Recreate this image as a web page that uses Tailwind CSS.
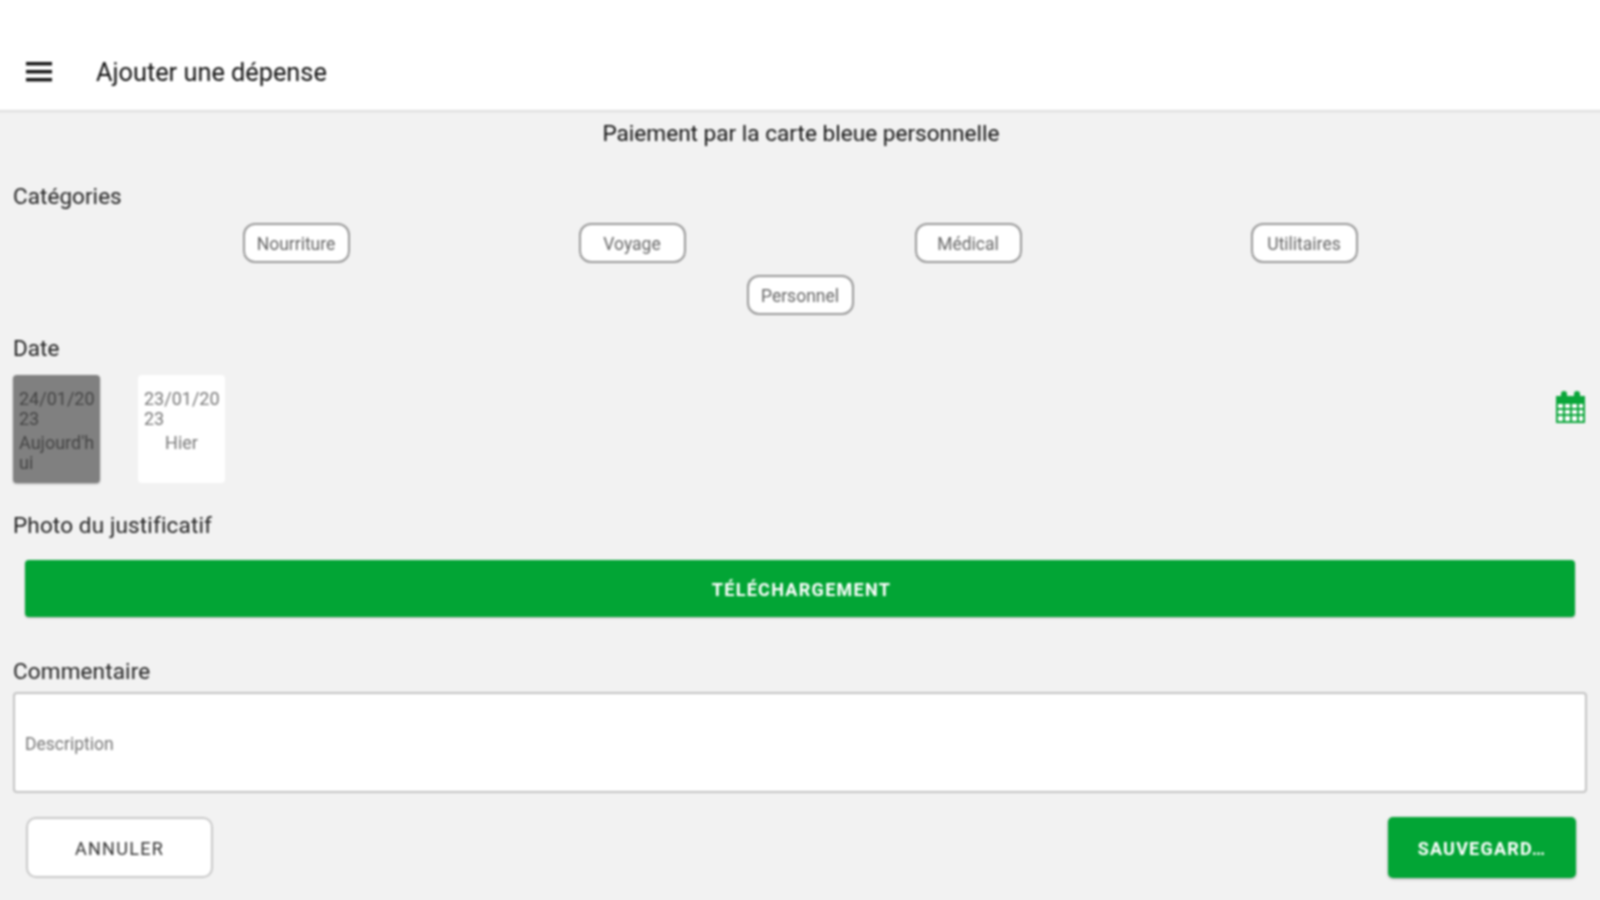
<!DOCTYPE html>
<html lang="fr">
<head>
<meta charset="utf-8">
<script src="https://cdn.jsdelivr.net/npm/@tailwindcss/browser@4"></script>
<title>Ajouter une dépense</title>
</head>
<body class="bg-[#f2f2f2]">
<div class="w-[1600px] h-[900px] overflow-hidden">
<div class="-ml-[4px] -mt-[4px] w-[1608px] h-[908px] px-[4px] bg-[#f2f2f2] font-['Roboto',sans-serif] text-[#222] flex flex-col blur-[0.8px]">
  <header class="-mx-[4px] h-[114px] shrink-0 bg-white flex items-center pt-[38px] shadow-[0_1px_3px_rgba(0,0,0,0.15)] pl-[30px]">
    <svg class="w-[27px] h-[20px]" viewBox="0 0 27 20" fill="#111"><rect x="0" y="0" width="26" height="3.4"/><rect x="0" y="8" width="26" height="3.4"/><rect x="0" y="16" width="26" height="3.4"/></svg>
    <h1 class="ml-[43px] mt-[1px] text-[25.3px] leading-[28px] text-[#111]">Ajouter une dépense</h1>
  </header>
  <p class="text-center text-[22.6px] leading-[24px] text-[#111] mt-[12px] pl-[2px]">Paiement par la carte bleue personnelle</p>
  <h2 class="ml-[13px] mt-[38px] text-[22.5px] leading-[24px] tracking-[0.05px]">Catégories</h2>
  <div class="mt-[15px] flex flex-wrap justify-center gap-y-[12px] px-[128px] text-[17.5px] leading-[20px] text-[#666]">
    <div class="w-[336px] flex justify-center"><span class="w-[107px] h-[40px] pt-[2px] flex items-center justify-center bg-white rounded-[12px] border-2 border-[#999]">Nourriture</span></div>
    <div class="w-[336px] flex justify-center"><span class="w-[107px] h-[40px] pt-[2px] flex items-center justify-center bg-white rounded-[12px] border-2 border-[#999]">Voyage</span></div>
    <div class="w-[336px] flex justify-center"><span class="w-[107px] h-[40px] pt-[2px] flex items-center justify-center bg-white rounded-[12px] border-2 border-[#999]">Médical</span></div>
    <div class="w-[336px] flex justify-center"><span class="w-[107px] h-[40px] pt-[2px] flex items-center justify-center bg-white rounded-[12px] border-2 border-[#999]">Utilitaires</span></div>
    <div class="w-[336px] flex justify-center"><span class="w-[107px] h-[40px] pt-[2px] flex items-center justify-center bg-white rounded-[12px] border-2 border-[#999]">Personnel</span></div>
  </div>
  <h2 class="ml-[13px] mt-[21px] text-[22.5px] leading-[24px] tracking-[0.05px]">Date</h2>
  <div class="mt-[15px] px-[13px] flex items-start justify-between">
    <div class="flex gap-[38px] text-[18px] leading-[20px] whitespace-nowrap">
      <div class="w-[87px] h-[108px] bg-[#808080] rounded-[4px] pt-[14px] px-[6px] text-[#444] shadow-[0_1px_2px_rgba(0,0,0,0.3)]"><p>24/01/20<br>23</p><p class="mt-[4px]">Aujourd'h<br>ui</p></div>
      <div class="w-[87px] h-[108px] bg-white rounded-[4px] pt-[14px] px-[6px] text-[#777]"><p>23/01/20<br>23</p><p class="mt-[4px] text-center">Hier</p></div>
    </div>
    <svg class="w-[31px] h-[32px] mt-[16px] mr-[1px]" viewBox="0 0 31 32" fill="#0aa63a">
      <rect x="1" y="11" width="29" height="21" fill="#fff"/>
      <path d="M1 5h5V3a3 3 0 0 1 6 0v2h7V3a3 3 0 0 1 6 0v2h5v6H1z"/>
      <path fill-rule="evenodd" d="M1 11h29v21H1zM3 13v4h5v-4zm7 0v4h5v-4zm7 0v4h5v-4zm7 0v4h4v-4zM3 19v4h5v-4zm7 0v4h5v-4zm7 0v4h5v-4zm7 0v4h4v-4zM3 25v5h5v-5zm7 0v5h5v-5zm7 0v5h5v-5zm7 0v5h4v-5z"/>
    </svg>
  </div>
  <h2 class="ml-[13px] mt-[30px] text-[22.5px] leading-[24px] tracking-[0.15px]">Photo du justificatif</h2>
  <button class="mx-[25px] mt-[23px] h-[57px] pt-[2px] bg-[#02a535] rounded-[4px] text-white font-bold text-[18px] tracking-[1.3px] pl-[3px] shadow-[0_1px_2px_rgba(0,0,0,0.25)]">TÉLÉCHARGEMENT</button>
  <h2 class="ml-[13px] mt-[42px] text-[22.5px] leading-[24px] tracking-[0.15px]">Commentaire</h2>
  <div class="mx-[13px] mt-[9px] h-[101px] pt-[3px] bg-white border-2 border-[#c4c4c4] rounded-[4px] flex items-center pl-[10px] text-[17.5px] text-[#777]">Description</div>
  <div class="mt-[24px] pl-[26px] pr-[24px] flex justify-between">
    <button class="w-[187px] h-[61px] pt-[2px] bg-white border-2 border-[#c8c8c8] rounded-[10px] text-[18px] tracking-[1.3px] text-[#333]">ANNULER</button>
    <button class="w-[188px] h-[61px] pt-[2px] bg-[#02a535] rounded-[5px] text-white font-bold text-[18px] tracking-[1.2px] shadow-[0_1px_3px_rgba(0,0,0,0.3)]">SAUVEGARD…</button>
  </div>
</div>
</div>
</body>
</html>
